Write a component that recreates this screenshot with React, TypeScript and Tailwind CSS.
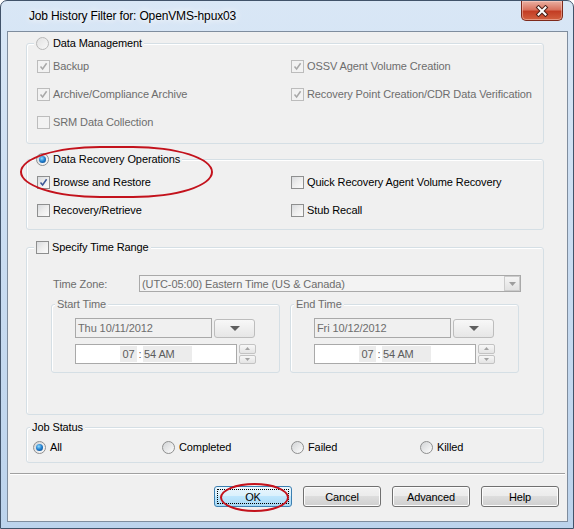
import React from "react";

type BoxProps = { checked?: boolean; disabled?: boolean };

function Check({ checked, disabled }: BoxProps) {
  return (
    <span
      className={`flex h-[13px] w-[13px] shrink-0 items-center justify-center border ${
        disabled ? "border-[#bcbcbc] bg-[#f4f4f4]" : "border-[#8e8f8f] bg-white"
      }`}
    >
      <span
        className={`flex h-[11px] w-[11px] items-center justify-center ${
          disabled ? "bg-[#f2f2f2]" : "bg-gradient-to-br from-[#d9dbde] via-[#eeeeee] to-[#fbfbfb]"
        }`}
      >
        {checked && (
          <svg width="9" height="9" viewBox="0 0 9 9">
            <polyline
              points="1.5,4.5 3.6,7 7.6,1.2"
              fill="none"
              stroke={disabled ? "#a8a8a8" : "#3c5796"}
              strokeWidth="1.5"
            />
          </svg>
        )}
      </span>
    </span>
  );
}

function Radio({ checked, disabled }: BoxProps) {
  return (
    <span
      className={`flex h-[13px] w-[13px] shrink-0 items-center justify-center rounded-full border ${
        disabled
          ? "border-[#b8b8b8] bg-gradient-to-br from-[#e2e2e2] to-[#f8f8f8]"
          : "border-[#8e8f8f] bg-gradient-to-br from-[#d2d4d6] to-[#fdfdfd]"
      }`}
    >
      {checked && (
        <span className="h-[7px] w-[7px] rounded-full bg-[radial-gradient(circle_at_40%_35%,#8fdcff,#1f7ccc_50%,#0a3f78)]" />
      )}
    </span>
  );
}

function CheckItem({ label, checked, disabled }: BoxProps & { label: string }) {
  return (
    <div className="flex h-[14px] items-center gap-[3px]">
      <Check checked={checked} disabled={disabled} />
      <span className={disabled ? "text-[#6d6d6d]" : "text-black"}>{label}</span>
    </div>
  );
}

function RadioItem({ label, checked }: { label: string; checked?: boolean }) {
  return (
    <div className="flex h-[14px] items-center gap-[4px]">
      <Radio checked={checked} />
      <span>{label}</span>
    </div>
  );
}

function Group({
  legend,
  className = "",
  inset = "ml-[7px]",
  children,
}: {
  legend: React.ReactNode;
  className?: string;
  inset?: string;
  children?: React.ReactNode;
}) {
  return (
    <div className={`rounded-[3px] border border-[#d5dfe5] shadow-[inset_1px_1px_0_#fff] ${className}`}>
      <div className="-mt-[8px] flex h-[14px]">
        <span className={`flex items-center gap-[4px] bg-[#f0f0f0] px-[2px] ${inset}`}>{legend}</span>
      </div>
      {children}
    </div>
  );
}

function DownArrow({ w = 9, h = 5, color = "#5f5f5f" }: { w?: number; h?: number; color?: string }) {
  return (
    <svg width={w} height={h} viewBox={`0 0 ${w} ${h}`}>
      <polygon points={`0,0 ${w},0 ${w / 2},${h}`} fill={color} />
    </svg>
  );
}

function Spin() {
  return (
    <div className="flex h-[20px] w-[17px] flex-col gap-px">
      <span className="flex flex-1 items-center justify-center rounded-[2px] border border-[#c3c3c3] bg-gradient-to-b from-[#f7f7f7] to-[#e4e4e4]">
        <svg width="5" height="3" viewBox="0 0 5 3">
          <polygon points="0,3 5,3 2.5,0" fill="#a2a2a2" />
        </svg>
      </span>
      <span className="flex flex-1 items-center justify-center rounded-[2px] border border-[#c3c3c3] bg-gradient-to-b from-[#f7f7f7] to-[#e4e4e4]">
        <svg width="5" height="3" viewBox="0 0 5 3">
          <polygon points="0,0 5,0 2.5,3" fill="#a2a2a2" />
        </svg>
      </span>
    </div>
  );
}

function TimeGroup({ title, date }: { title: string; date: string }) {
  return (
    <Group
      className="w-[229px] pb-[8px]"
      inset="ml-[3px]"
      legend={<span className="text-[#6d6d6d]">{title}</span>}
    >
      <div className="mt-[7px] flex items-center gap-[2px] pl-[23px]">
        <div className="flex h-[20px] w-[137px] items-center border border-[#a9a9a9] bg-[#f0f0f0] pl-[2px] text-[#6d6d6d]">
          {date}
        </div>
        <div className="flex h-[19px] w-[41px] items-center justify-center rounded-[3px] border border-[#bdbdbd] bg-gradient-to-b from-[#f8f8f8] to-[#e6e6e6]">
          <DownArrow w={10} h={5} />
        </div>
      </div>
      <div className="mt-[6px] flex items-center gap-[2px] pl-[23px]">
        <div className="flex h-[20px] w-[162px] items-center border border-[#a9a9a9] bg-white text-[#5c5c5c]">
          <span className="ml-[44px] flex h-[16px] w-[17px] items-center justify-center bg-[#ececec]">07</span>
          <span className="flex w-[6px] justify-center">:</span>
          <span className="flex h-[16px] w-[49px] items-center bg-[#ececec] pl-[1px]">54 AM</span>
        </div>
        <Spin />
      </div>
    </Group>
  );
}

function Button({ label, primary }: { label: string; primary?: boolean }) {
  if (primary) {
    return (
      <button className="flex h-[21px] w-[78px] items-center justify-center rounded-[3px] border border-[#3c7fb1] bg-[linear-gradient(#eaf6fd,#d9f0fc_50%,#bee6fd_50%,#a7d9f5)] p-[2px]">
        <span className="flex h-full w-full items-center justify-center border border-dotted border-black">
          {label}
        </span>
      </button>
    );
  }
  return (
    <button className="flex h-[21px] w-[78px] items-center justify-center rounded-[3px] border border-[#707070] bg-[linear-gradient(#f2f2f2,#ebebeb_50%,#dddddd_50%,#cfcfcf)] shadow-[inset_0_0_0_1px_#fcfcfc]">
      {label}
    </button>
  );
}

export default function App() {
  return (
    <div className="relative h-[529px] w-[574px] font-['Liberation_Sans',Arial,sans-serif] text-[11px] leading-[14px] text-black">
      <div className="flex h-full w-full flex-col rounded-t-[7px] border border-[#41536a] bg-gradient-to-b from-[#d9e7f6] via-[#c9dcf1] to-[#bcd3ec]">
        {/* title bar */}
        <div className="flex h-[30px] items-start">
          <span className="ml-[28px] mt-[8px] text-[12px] tracking-[-0.15px] [text-shadow:0_0_6px_#ffffff,0_0_10px_#ffffff]">
            Job History Filter for: OpenVMS-hpux03
          </span>
          <div className="ml-auto mr-[10px] flex h-[20px] w-[42px] items-center justify-center rounded-b-[5px] border border-t-0 border-[#7d2a1c] bg-[linear-gradient(#eab0a2,#d9735f_45%,#c33d24_55%,#d2603f)] shadow-[inset_0_0_0_1px_rgba(255,220,210,0.45)]">
            <svg width="14" height="12" viewBox="0 0 14 12">
              <path d="M3.5 2.5 L10.5 9.5 M10.5 2.5 L3.5 9.5" stroke="#4a2018" strokeWidth="4" strokeLinecap="square" />
              <path d="M3.5 2.5 L10.5 9.5 M10.5 2.5 L3.5 9.5" stroke="#ffffff" strokeWidth="2" strokeLinecap="square" />
            </svg>
          </div>
        </div>

        <div className="flex flex-1 pb-[6px] pl-[6px] pr-[5px]">
          <div className="flex flex-1 flex-col border border-[#7f8d9e] bg-[#f0f0f0] tracking-[-0.1px]">
            {/* Data Management */}
            <Group
              className="ml-[18px] mt-[11px] w-[518px] pb-[14px]"
              legend={
                <>
                  <Radio disabled />
                  <span>Data Management</span>
                </>
              }
            >
              <div className="mt-[9px] grid grid-cols-[254px_1fr] gap-y-[14px] pl-[10px]">
                <CheckItem label="Backup" checked disabled />
                <CheckItem label="OSSV Agent Volume Creation" checked disabled />
                <CheckItem label="Archive/Compliance Archive" checked disabled />
                <CheckItem label="Recovery Point Creation/CDR Data Verification" checked disabled />
                <CheckItem label="SRM Data Collection" disabled />
              </div>
            </Group>

            {/* Data Recovery Operations */}
            <Group
              className="ml-[18px] mt-[15px] w-[518px] pb-[12px]"
              legend={
                <>
                  <Radio checked />
                  <span>Data Recovery Operations</span>
                </>
              }
            >
              <div className="mt-[9px] grid grid-cols-[254px_1fr] gap-y-[14px] pl-[10px]">
                <CheckItem label="Browse and Restore" checked />
                <CheckItem label="Quick Recovery Agent Volume Recovery" />
                <CheckItem label="Recovery/Retrieve" />
                <CheckItem label="Stub Recall" />
              </div>
            </Group>

            {/* Time range */}
            <Group
              className="ml-[18px] mt-[17px] w-[518px] pb-[41px]"
              legend={
                <>
                  <Check />
                  <span className="-ml-[1px]">Specify Time Range</span>
                </>
              }
            >
              <div className="mt-[21px] flex h-[17px] items-center pl-[24px]">
                <span className="w-[88px] pl-[2px] text-[#6d6d6d]">Time Zone:</span>
                <div className="flex h-[17px] w-[382px] items-center justify-between border border-[#a9a9a9] bg-[#f3f3f3] pl-[2px] text-[#6d6d6d]">
                  <span>(UTC-05:00) Eastern Time (US &amp; Canada)</span>
                  <span className="flex h-[15px] w-[16px] items-center justify-center border border-[#cbcbcb] bg-gradient-to-b from-[#f4f4f4] to-[#e2e2e2]">
                    <DownArrow w={7} h={4} color="#9d9d9d" />
                  </span>
                </div>
              </div>
              <div className="mt-[12px] flex gap-[10px] pl-[24px]">
                <TimeGroup title="Start Time" date="Thu 10/11/2012" />
                <TimeGroup title="End Time" date="Fri 10/12/2012" />
              </div>
            </Group>

            {/* Job status */}
            <Group
              className="ml-[18px] mt-[12px] w-[518px] pb-[8px]"
              inset="ml-[3px]"
              legend={<span>Job Status</span>}
            >
              <div className="mt-[6px] grid grid-cols-[129px_129px_129px_1fr] pl-[6px]">
                <RadioItem label="All" checked />
                <RadioItem label="Completed" />
                <RadioItem label="Failed" />
                <RadioItem label="Killed" />
              </div>
            </Group>

            <div className="mx-[2px] mt-[10px] border-t border-b border-t-[#a0a0a0] border-b-white" />

            <div className="mt-[11px] flex justify-end gap-[11px] pr-[8px]">
              <Button label="OK" primary />
              <Button label="Cancel" />
              <Button label="Advanced" />
              <Button label="Help" />
            </div>
          </div>
        </div>
      </div>

      {/* red highlight marks */}
      <div className="pointer-events-none absolute left-[20px] top-[146px] h-[52px] w-[193px] rounded-[80px/26px] border-2 border-[#c3121c]" />
      <div className="pointer-events-none absolute left-[220px] top-[483px] h-[29px] w-[69px] rounded-[50%] border-2 border-[#c3121c]" />
    </div>
  );
}
